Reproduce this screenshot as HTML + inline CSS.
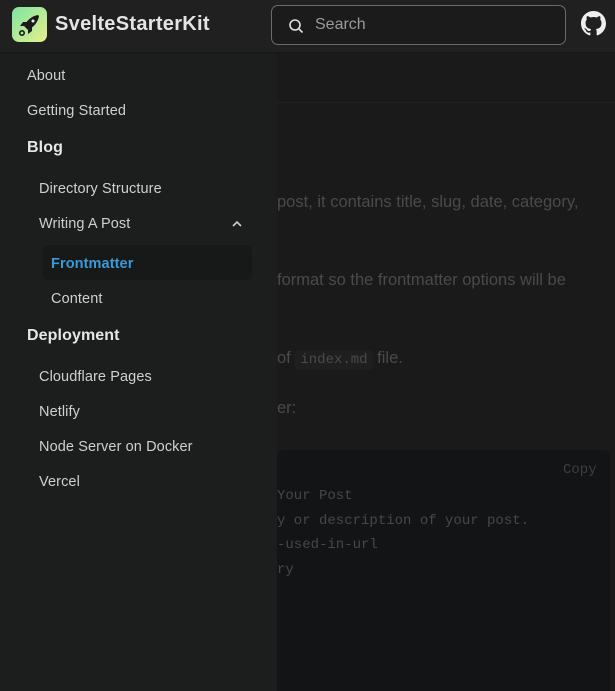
<!DOCTYPE html>
<html><head><meta charset="utf-8"><style>
*{margin:0;padding:0;box-sizing:border-box}
html,body{width:615px;height:691px;overflow:hidden}
body{background:#1a1a1a;font-family:"Liberation Sans",sans-serif;position:relative}
.hdr{position:absolute;left:0;top:0;width:615px;height:53px;background:#1f201f;border-bottom:1px solid #161716}
.logo{position:absolute;left:12px;top:7px;width:35px;height:35px;border-radius:7px;background:linear-gradient(135deg,#7fe3a3,#e6f08a)}
.brand{position:absolute;left:55px;top:13px;font-size:20px;font-weight:bold;color:#e4e4e4;letter-spacing:0.3px}
.search{position:absolute;left:271px;top:5px;width:295px;height:40px;border:1px solid #6a6b6a;border-radius:7px;background:#1a1b1a}
.search span{position:absolute;left:43px;top:10px;font-size:16px;color:#9a9a9a}
.side{position:absolute;left:0;top:54px;width:277px;height:637px;background:#1c1e1d}
.side div{position:absolute;font-size:14.5px;color:#cfcfcf;letter-spacing:0.1px}
.side .h{font-size:16px;font-weight:bold;color:#e6e6e6}
.sel{position:absolute;left:43px;top:246px;width:209px;height:35px;background:#171918;border-radius:5px}
.main{position:absolute;left:277px;top:54px;width:338px;height:637px;color:#4a4a4a;font-size:16.5px;overflow:hidden}
.bar{position:absolute;left:0;top:0;width:338px;height:49px;border-bottom:1px solid #232323}
.main p{position:absolute;left:0;white-space:nowrap}
.code{position:absolute;left:0;top:396px;width:333px;height:241px;background:#131416;border-radius:6px 6px 0 0;font-family:"Liberation Mono",monospace;font-size:14px;color:#474747}
.code div{position:absolute;left:0;white-space:pre}
</style></head><body>
<div class="hdr">
<div class="logo"><svg width="35" height="35" viewBox="0 0 35 35"><path d="M26 8 C20 9 15 13 12 19 L16 23 C22 20 26 15 27 9Z" fill="#1a1a1a"/><path d="M12 19 L8 19 L11 15 L15 15Z M16 23 L16 27 L20 24 L20 20Z" fill="#1a1a1a"/><circle cx="10" cy="26" r="2.2" fill="none" stroke="#1a1a1a" stroke-width="1.6"/><circle cx="21" cy="14" r="1.5" fill="#eee"/></svg></div>
<div class="brand">SvelteStarterKit</div>
<div class="search"><svg style="position:absolute;left:16px;top:12px" width="16" height="16" viewBox="0 0 16 16"><circle cx="7" cy="7" r="5" fill="none" stroke="#ddd" stroke-width="1.6"/><path d="M11 11l3.5 3.5" stroke="#ddd" stroke-width="1.6"/></svg><span>Search</span></div>
<svg style="position:absolute;left:581px;top:11px" width="25" height="25" viewBox="0 0 16 16"><path fill="#eee" d="M8 0C3.58 0 0 3.58 0 8c0 3.54 2.29 6.53 5.47 7.59.4.07.55-.17.55-.38 0-.19-.01-.82-.01-1.49-2.01.37-2.53-.49-2.69-.94-.09-.23-.48-.94-.82-1.13-.28-.15-.68-.52-.01-.53.63-.01 1.08.58 1.23.82.72 1.21 1.87.87 2.33.66.07-.52.28-.87.51-1.07-1.78-.2-3.64-.89-3.64-3.95 0-.87.31-1.59.82-2.15-.08-.2-.36-1.02.08-2.12 0 0 .67-.21 2.2.82.64-.18 1.32-.27 2-.27.68 0 1.36.09 2 .27 1.53-1.04 2.2-.82 2.2-.82.44 1.1.16 1.92.08 2.12.51.56.82 1.27.82 2.15 0 3.07-1.87 3.75-3.65 3.95.29.25.54.73.54 1.48 0 1.07-.01 1.93-.01 2.2 0 .21.15.46.55.38A8.01 8.01 0 0016 8c0-4.42-3.58-8-8-8z"/></svg>
</div>
<div class="main">
<div class="bar"></div>
<p style="top:139px">post, it contains title, slug, date, category,</p>
<p style="top:217px">format so the frontmatter options will be</p>
<p style="top:295px">of <span style="font-family:'Liberation Mono',monospace;font-size:14px;background:#1f1f1f;padding:2px 5px;border-radius:4px">index.md</span> file.</p>
<p style="top:345px">er:</p>
<div class="code">
<div style="left:286px;top:12px;color:#3e3e3e">Copy</div>
<div style="top:38px">Your Post</div>
<div style="top:63px">y or description of your post.</div>
<div style="top:87px">-used-in-url</div>
<div style="top:112px">ry</div>
</div>
</div>
<div class="side">
<div style="left:27px;top:14px">About</div>
<div style="left:27px;top:49px">Getting Started</div>
<div class="h" style="left:27px;top:85px">Blog</div>
<div style="left:39px;top:127px">Directory Structure</div>
<div style="left:39px;top:162px">Writing A Post</div>
<svg style="position:absolute;left:231px;top:166px" width="12" height="8" viewBox="0 0 12 8"><path d="M2 6l4-4 4 4" fill="none" stroke="#ccc" stroke-width="1.6"/></svg>
<span class="sel" style="top:191px"></span>
<div style="left:51px;top:202px;color:#3a9ad9;font-weight:bold">Frontmatter</div>
<div style="left:51px;top:237px">Content</div>
<div class="h" style="left:27px;top:273px">Deployment</div>
<div style="left:39px;top:315px">Cloudflare Pages</div>
<div style="left:39px;top:350px">Netlify</div>
<div style="left:39px;top:385px">Node Server on Docker</div>
<div style="left:39px;top:420px">Vercel</div>
</div>
</body></html>
